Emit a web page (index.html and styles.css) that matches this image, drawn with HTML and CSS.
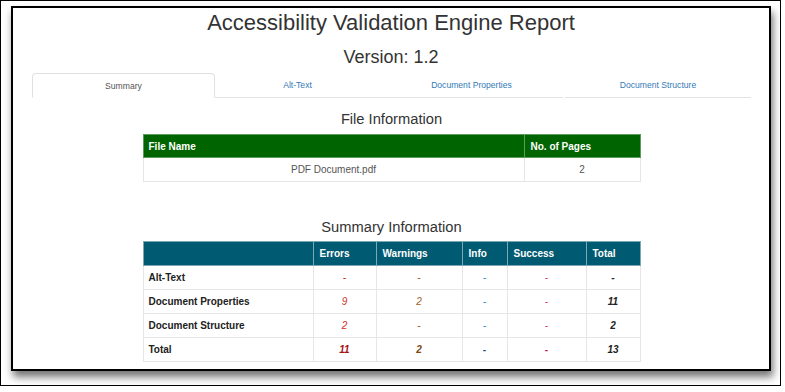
FILE: index.html
```html
<!DOCTYPE html>
<html lang="en">
<head>
    <meta charset="UTF-8">
    <meta name="viewport" content="width=device-width, initial-scale=1.0">
    <title>Accessibility Validation Engine Report</title>
    <link rel="stylesheet" href="styles.css">
</head>
<body>

<div class="shot">
    <div class="frame">
        <h1 class="title">Accessibility Validation Engine Report</h1>
        <h2 class="version">Version: 1.2</h2>

        <div class="report">
            <ul class="tabs">
                <li class="tab tab-summary active">Summary</li>
                <li class="tab tab-alt">Alt-Text</li>
                <li class="tab tab-props">Document Properties</li>
                <li class="tab tab-struct">Document Structure</li>
            </ul>

            <h3 class="section-title first">File Information</h3>
            <table class="grid file-table">
                <colgroup>
                    <col class="c-name">
                    <col class="c-pages">
                </colgroup>
                <thead>
                <tr>
                    <th>File Name</th>
                    <th>No. of Pages</th>
                </tr>
                </thead>
                <tbody>
                <tr>
                    <td class="center">PDF Document.pdf</td>
                    <td class="center">2</td>
                </tr>
                </tbody>
            </table>

            <h3 class="section-title second">Summary Information</h3>
            <table class="grid summary-table">
                <colgroup>
                    <col class="c-label">
                    <col class="c-errors">
                    <col class="c-warnings">
                    <col class="c-info">
                    <col class="c-success">
                    <col class="c-total">
                </colgroup>
                <thead>
                <tr>
                    <th></th>
                    <th>Errors</th>
                    <th>Warnings</th>
                    <th>Info</th>
                    <th>Success</th>
                    <th>Total</th>
                </tr>
                </thead>
                <tbody>
                <tr>
                    <td class="label">Alt-Text</td>
                    <td class="val err">-</td>
                    <td class="val warn">-</td>
                    <td class="val info">-</td>
                    <td class="val ok">-</td>
                    <td class="val sum">-</td>
                </tr>
                <tr>
                    <td class="label">Document Properties</td>
                    <td class="val err">9</td>
                    <td class="val warn">2</td>
                    <td class="val info">-</td>
                    <td class="val ok">-</td>
                    <td class="val sum">11</td>
                </tr>
                <tr>
                    <td class="label">Document Structure</td>
                    <td class="val err">2</td>
                    <td class="val warn">-</td>
                    <td class="val info">-</td>
                    <td class="val ok">-</td>
                    <td class="val sum">2</td>
                </tr>
                <tr class="total-row">
                    <td class="label">Total</td>
                    <td class="val err">11</td>
                    <td class="val warn">2</td>
                    <td class="val info">-</td>
                    <td class="val ok">-</td>
                    <td class="val sum">13</td>
                </tr>
                </tbody>
            </table>
        </div>
    </div>
</div>

</body>
</html>
```

FILE: styles.css
```css
body {
    font-family: "Liberation Sans", Arial, sans-serif;
    margin: 0;
    background: #fff;
    color: #333;
}

/* outer photo border */
.shot {
    width: 781px;
    height: 386px;
    box-sizing: border-box;
    border: 1px solid #000;
    padding: 5px 0 0 10px;
}

.frame {
    width: 760px;
    height: 365px;
    box-sizing: border-box;
    border: 2px solid #000;
    background: #fff;
    box-shadow: 2px 6px 8px rgba(0, 0, 0, 0.55);
    overflow: hidden;
}

.title {
    margin: 2px 0 0;
    font-size: 22px;
    line-height: 26px;
    font-weight: normal;
    text-align: center;
    color: #333;
}

.version {
    margin: 10px 0 0;
    font-size: 18px;
    line-height: 22px;
    font-weight: normal;
    text-align: center;
    color: #333;
}

.report {
    padding: 0 18px 0 19px;
}

.tabs {
    display: flex;
    list-style: none;
    margin: 5px 0 0;
    padding: 0;
}

.tab {
    height: 25px;
    box-sizing: border-box;
    display: flex;
    align-items: center;
    justify-content: center;
    font-size: 8.6px;
    color: #337ab7;
    border-bottom: 1px solid #e3e3e3;
}

.tab.active {
    color: #555;
    border: 1px solid #e0e0e0;
    border-bottom-color: transparent;
    border-radius: 4px 4px 0 0;
}

.tab-summary { width: 183px; }
.tab-alt { width: 165px; }
.tab-props { width: 183px; margin-right: 2px; }
.tab-struct { width: 186px; }

.section-title {
    margin: 0;
    font-size: 14.7px;
    line-height: 18px;
    font-weight: normal;
    text-align: center;
    color: #333;
}

.section-title.first { margin-top: 12px; }
.section-title.second { margin-top: 36px; }

.grid {
    width: 497px;
    margin: 6px auto 0;
    border-collapse: collapse;
    table-layout: fixed;
    font-size: 10px;
    border: 1px solid #e6e6e6;
}

.summary-table { margin-top: 5px; }

.grid th {
    height: 22px;
    padding: 0 6px;
    text-align: left;
    font-weight: bold;
    color: #fff;
}

.grid td {
    height: 23px;
    padding: 0 5px;
    border: 1px solid #e6e6e6;
    color: #555;
}

.file-table thead tr { background: #006400; }
.file-table th { border: 1px solid #5e9a5e; }
.file-table th:first-child { padding-left: 5px; }

.summary-table thead tr { background: #005a71; }
.summary-table th { border: 1px solid #7fa7b3; height: 23px; }
.summary-table td { height: 23px; }

.c-name { width: 381px; }
.c-pages { width: 116px; }

.c-label { width: 170px; }
.c-errors { width: 63px; }
.c-warnings { width: 86px; }
.c-info { width: 45px; }
.c-success { width: 79px; }
.c-total { width: 54px; }

.center { text-align: center; }

.label {
    font-weight: bold;
}

.grid td.label { color: #222; }

.val {
    text-align: center;
    font-style: italic;
}

.grid td.err { color: #d0312d; }
.grid td.warn { color: #a0612c; }
.grid td.info { color: #3a8fd0; }
.grid td.ok { color: #e0467a; }
.grid td.sum { color: #222; font-weight: bold; }

.total-row td { font-weight: bold; }
.grid .total-row td.err { color: #a31515; }
.grid .total-row td.warn { color: #7a4a12; }
.grid .total-row td.info { color: #1e4f7a; }
.grid .total-row td.ok { color: #c2185b; }
```
